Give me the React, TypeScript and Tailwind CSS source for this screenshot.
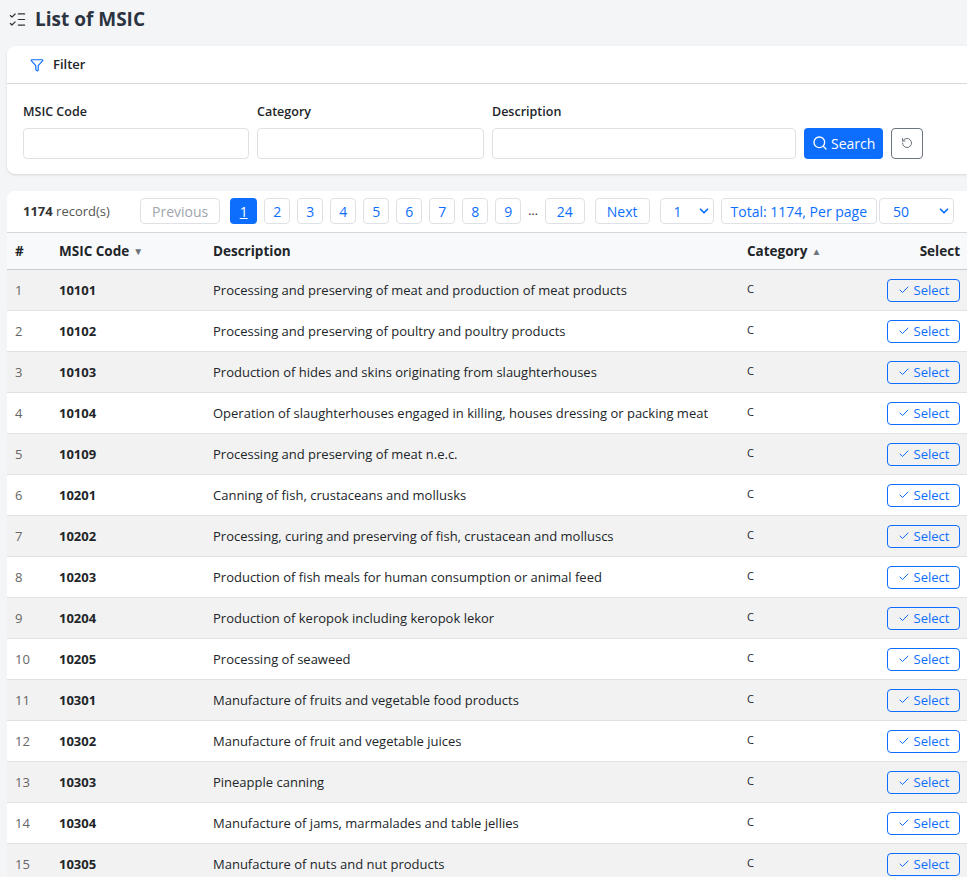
import { Search, RotateCw, Check, ChevronDown, Filter, ListChecks } from 'lucide-react';

const rows: [string, string][] = [
  ['10101', 'Processing and preserving of meat and production of meat products'],
  ['10102', 'Processing and preserving of poultry and poultry products'],
  ['10103', 'Production of hides and skins originating from slaughterhouses'],
  ['10104', 'Operation of slaughterhouses engaged in killing, houses dressing or packing meat'],
  ['10109', 'Processing and preserving of meat n.e.c.'],
  ['10201', 'Canning of fish, crustaceans and mollusks'],
  ['10202', 'Processing, curing and preserving of fish, crustacean and molluscs'],
  ['10203', 'Production of fish meals for human consumption or animal feed'],
  ['10204', 'Production of keropok including keropok lekor'],
  ['10205', 'Processing of seaweed'],
  ['10301', 'Manufacture of fruits and vegetable food products'],
  ['10302', 'Manufacture of fruit and vegetable juices'],
  ['10303', 'Pineapple canning'],
  ['10304', 'Manufacture of jams, marmalades and table jellies'],
  ['10305', 'Manufacture of nuts and nut products'],
];

const pageBtn = 'h-[26px] px-[11px] border border-[#dee2e6] rounded-[4px] text-[#0d6efd] bg-white text-[14px] flex items-center';

const App = () => {
  return (
    <div className="min-h-[877px] bg-[#f4f5f7] text-[#212529] overflow-hidden" style={{ fontFamily: '"Open Sans", "Noto Sans", sans-serif' }}>
      {/* 标题 */}
      <div className="flex items-center gap-2 pl-[8px] h-[38px]">
        <ListChecks size={19} strokeWidth={1.5} className="text-[#333]" />
        <h1 className="text-[19px] font-bold text-[#2b3440]">List of MSIC</h1>
      </div>

      {/* 过滤 */}
      <div className="ml-[7px] mt-[8px] bg-white rounded-l-[8px] shadow-sm">
        <div className="h-[38px] flex items-center gap-[9px] pl-[23px] border-b border-[#d6d8db]">
          <Filter size={14} className="text-[#0d6efd]" />
          <span className="text-[13px] font-semibold">Filter</span>
        </div>
        <div className="flex items-end gap-2 pl-[16px] pt-[19px] pb-[15px]">
          <div className="w-[226px]">
            <div className="text-[12.5px] font-semibold mb-[6px]">MSIC Code</div>
            <div className="h-[31px] border border-[#dee2e6] rounded-[4px]" />
          </div>
          <div className="w-[227px]">
            <div className="text-[12.5px] font-semibold mb-[6px]">Category</div>
            <div className="h-[31px] border border-[#dee2e6] rounded-[4px]" />
          </div>
          <div className="w-[304px]">
            <div className="text-[12.5px] font-semibold mb-[6px]">Description</div>
            <div className="h-[31px] border border-[#dee2e6] rounded-[4px]" />
          </div>
          <button className="h-[31px] px-[8px] bg-[#0d6efd] text-white rounded-[4px] text-[14px] flex items-center gap-[3px]">
            <Search size={16} /> Search
          </button>
          <button className="h-[31px] w-[32px] border border-[#6c757d] rounded-[4px] flex items-center justify-center text-[#6c757d]">
            <RotateCw size={12} className="-scale-x-100" />
          </button>
        </div>
      </div>

      {/* 列表 */}
      <div className="ml-[7px] mt-[17px] bg-white rounded-tl-[8px]">
        <div className="h-[42px] flex items-center pl-[16px] gap-[7px] border-b border-[#d6d8db] text-[13px]">
          <span className="w-[110px] text-[#555]"><b className="text-[#333]">1174</b> record(s)</span>
          <span className={pageBtn + ' !text-[#a0a6ac]'}>Previous</span>
          <span className="h-[26px] w-[27px] rounded-[4px] bg-[#0d6efd] text-white text-[14px] flex items-center justify-center underline ml-[3px]">1</span>
          {['2', '3', '4', '5', '6', '7', '8', '9'].map(p => (
            <span key={p} className={pageBtn + ' !px-[8px]'}>{p}</span>
          ))}
          <span className="text-[12px]">...</span>
          <span className={pageBtn}>24</span>
          <span className={pageBtn + ' ml-[3px]'}>Next</span>
          <span className={pageBtn + ' w-[54px] justify-between !px-[13px] !pr-[2px] ml-[3px]'}>1 <ChevronDown size={14} strokeWidth={3} /></span>
          <span className={pageBtn + ' !px-[9px]'}>Total: 1174, Per page</span>
          <span className={pageBtn + ' w-[75px] justify-between !px-[13px] !pr-[2px] -ml-[5px]'}>50 <ChevronDown size={14} strokeWidth={3} /></span>
        </div>
        <table className="w-full text-[13px] border-collapse">
          <thead>
            <tr className="h-[37px] bg-[#f8f9fa] border-b border-[#c8cbcf] text-[13.5px]">
              <th className="text-left font-bold pl-[8px] w-[52px]">#</th>
              <th className="text-left font-bold w-[154px]">
                <span className="flex items-center gap-1">MSIC Code <span className="text-[#6c757d] text-[10px]">▼</span></span>
              </th>
              <th className="text-left font-bold">Description</th>
              <th className="text-left font-bold w-[120px]">
                <span className="flex items-center gap-1">Category <span className="text-[#6c757d] text-[10px]">▲</span></span>
              </th>
              <th className="text-right font-bold pr-[7px] w-[100px]">Select</th>
            </tr>
          </thead>
          <tbody>
            {rows.map(([code, desc], i) => (
              <tr key={code} className={'h-[41px] border-b border-[#dee2e6] ' + (i % 2 === 0 ? 'bg-[#f2f2f2]' : 'bg-white')}>
                <td className="pl-[8px] text-[#666]">{i + 1}</td>
                <td className="font-bold">{code}</td>
                <td>{desc}</td>
                <td className="text-[11px] pb-[3px]">C</td>
                <td className="pr-[7px]">
                  <span className="ml-auto w-[73px] h-[23px] border border-[#0d6efd] rounded-[4px] text-[#0d6efd] text-[13px] flex items-center justify-center gap-[4px]">
                    <Check size={12} /> Select
                  </span>
                </td>
              </tr>
            ))}
          </tbody>
        </table>
      </div>
    </div>
  );
};

export default App;
